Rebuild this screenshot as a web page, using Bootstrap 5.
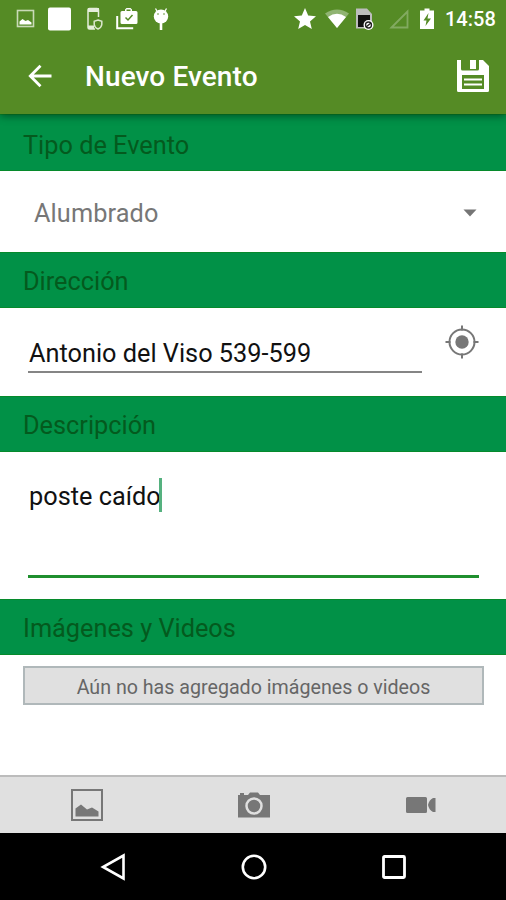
<!DOCTYPE html>
<html lang="es">
<head>
<meta charset="utf-8">
<meta name="viewport" content="width=device-width, initial-scale=1">
<title>Nuevo Evento</title>
<link href="https://cdn.jsdelivr.net/npm/bootstrap@5.3.0/dist/css/bootstrap.min.css" rel="stylesheet">
<style>
  body { font-family: Roboto, "Noto Sans", sans-serif; font-size: 25.3px; line-height: 30px; color: #111; background: #fff; }
  svg { display: block; flex: none; }
  .screen { height: 900px; max-width: 506px; }
  .top-area { background: #558b25; color: #fff; box-shadow: 0 2px 8px rgba(0,0,0,.45); z-index: 2; }
  .status-line { height: 38px; padding: 0 11px 0 16px; }
  .ic-square { margin-left: 13px; }
  .ic-phone { margin-left: 16px; }
  .ic-bag { margin-left: 13px; }
  .ic-droid { margin-left: 15px; }
  .ic-wifi { margin-left: 9px; }
  .ic-sim { margin-left: 6px; }
  .ic-signal { margin-left: 15px; }
  .ic-battery { margin: 0 11px; }
  .clock { font-size: 20px; font-weight: 500; line-height: 38px; width: 50px; white-space: nowrap; }
  .app-line { height: 76px; padding: 0 16px 0 27px; }
  .app-title { font-size: 28px; font-weight: 500; line-height: 30px; margin-left: 32px; padding-top: 2px; letter-spacing: .1px; }
  .section-title { background: #019147; color: #045a1e; height: 56px; padding: 3px 23px 0; font-size: 25.3px; font-weight: 400; line-height: 30px; border-top: 1px solid #068a2c; border-bottom: 1px solid #068a2c; }
  .section-first { height: 57px; padding-top: 6px; }
  .type-row { height: 81px; padding: 3px 29px 0 34px; color: #777; }
  .type-name { padding-top: 2px; letter-spacing: .1px; }
  .address-row { height: 88px; padding: 0 27px 0 28px; }
  .address-field { width: 394px; height: 65px; padding: 31px 0 0 1px; border-bottom: 2px solid #858585; }
  .locate { margin-top: 17px; }
  .description-row { height: 147px; padding: 0 27px 0 28px; }
  .description-field { height: 126px; padding: 26px 0 0 1px; border-bottom: 3px solid #1f8f2e; }
  .caret { width: 3px; height: 34px; background: #55b17f; margin-left: -2px; }
  .media-area { padding: 11px 22px 0 23px; }
  .media-empty { height: 39px; background: #e0e0e0; border: 2px solid #b0b8ba; color: #666; font-size: 19.65px; line-height: 24px; padding-top: 4px; }
  .media-tools { height: 58px; background: #e0e0e0; border-top: 2px solid #bcbcbc; color: #777; }
  .tool-image { padding-left: 4px; }
  .tool-video { padding-right: 2px; }
  .system-nav { height: 67px; background: #000; padding: 0 99px 0 100px; }
</style>
</head>
<body>
<main class="screen d-flex flex-column overflow-hidden">
  <header class="top-area position-relative flex-shrink-0">
    <div class="status-line d-flex align-items-center">
      <svg width="19" height="20" viewBox="0 0 19 20"><rect x="1.500" y="1.500" width="16" height="16" fill="none" stroke="#c9dab7" stroke-width="1.600"/><path d="M3.500 15.500v-3l3-2.500 3 2 2.500-1 3.500 2.500v2z" fill="#fff"/></svg>
      <svg class="ic-square" width="23" height="24" viewBox="0 0 23 24"><rect y=".5" width="23" height="23" rx="2" fill="#fff"/></svg>
      <svg class="ic-phone" width="16" height="24" viewBox="0 0 16 24"><path d="M11.500 10V2.800Q11.500 1.500 10 1.500H2.500Q1 1.500 1 2.800V20.500Q1 22 2.500 22H8" fill="none" stroke="#e5eedc" stroke-width="1.500"/><path d="M1 1h11v4H1zM1 18.500h6V22H1z" fill="#e5eedc"/><path d="M11 13l3.800 1.300v3.200Q14.500 20.500 11 22 7.500 20.500 7.200 17.500v-3.200z" fill="#558b25" stroke="#dce8cf" stroke-width="1.500"/></svg>
      <svg class="ic-bag" width="22" height="24" viewBox="0 0 22 24"><path d="M1.200 9v12.200h16" fill="none" stroke="#fff" stroke-width="2"/><path fill="#fff" fill-rule="evenodd" d="M6 4h3V2.500L10.500 1h4L16 2.500V4h4q1.500 0 1.500 1.500v10Q21.500 17 20 17H6q-1.500 0-1.500-1.500v-10Q4.500 4 6 4zM10.500 4h4V2.500h-4z"/><path d="M9.500 10.500l2.500 2.500 4.500-5" fill="none" stroke="#558b25" stroke-width="1.500"/></svg>
      <svg class="ic-droid" width="16" height="24" viewBox="0 0 16 24"><path d="M2.500 1.500l2 3.500M13.500 1.500l-2 3.500" stroke="#fff" stroke-width="1.300"/><ellipse cx="8" cy="9.500" rx="7.200" ry="7" fill="#fff"/><circle cx="5" cy="7" r=".8" fill="#558b25"/><circle cx="11" cy="7" r=".8" fill="#558b25"/><path d="M8 16v7" stroke="#fff" stroke-width="2.600"/></svg>
      <svg class="ms-auto" width="22" height="22" viewBox="0 0 22 22"><path fill="#fff" d="M11 0l3.200 7.500 7.800.7-6 5.200L17.800 21 11 17l-6.800 4L6 13.400 0 8.200l7.800-.7z"/></svg>
      <svg class="ic-wifi" width="24" height="20" viewBox="0 0 24 20"><path d="M0 4.500Q12-3.500 24 4.500L12 19z" fill="#90b472"/><path d="M3 8q9-6.500 18 0L12 19z" fill="#fff"/></svg>
      <svg class="ic-sim" width="19" height="24" viewBox="0 0 19 24"><path d="M1 1.500h11l5 5.500v14.500H1z" fill="#bdbdbd"/><path d="M3 8h12v12H3z" fill="#111"/><circle cx="13.500" cy="18" r="5" fill="#fff"/><circle cx="13.500" cy="18" r="3" fill="none" stroke="#222" stroke-width="1.300"/><path d="M11 20l5-4" stroke="#222" stroke-width="1.500"/></svg>
      <svg class="ic-signal" width="20" height="20" viewBox="0 0 20 20"><path d="M2.500 18.500L18.500 2.500v16z" fill="none" stroke="#82aa60" stroke-width="1.800"/></svg>
      <svg class="ic-battery" width="14" height="24" viewBox="0 0 14 24"><path d="M4.500 1.500h5v2H14V22H0V3.500h4.500z" fill="#fff"/><path d="M8.500 6L3.500 13.500H6.500L5.500 19l5.500-7.500H7.500z" fill="#558b25"/></svg>
      <span class="clock">14:58</span>
    </div>
    <div class="app-line d-flex align-items-center">
      <svg width="26" height="26" viewBox="0 0 26 26"><path d="M24.500 13H3.500M13.500 2.800L3.300 13l10.200 10.200" fill="none" stroke="#fff" stroke-width="2.800"/></svg>
      <h1 class="app-title mb-0">Nuevo Evento</h1>
      <svg class="ms-auto" width="33" height="33" viewBox="0 0 33 33"><path fill="#fff" fill-rule="evenodd" d="M0 0h4v9q0 1.500 1.500 1.500h15Q22 10.500 22 9V0h4l6 6v24.500q0 1.500-1.500 1.500h-29Q0 32 0 30.500zM5 15v14h22V15z"/><path d="M13 0h6v9h-6z" fill="#fff"/><path d="M7 19.500h18M7 24.500h18" stroke="#fff" stroke-width="2.200"/></svg>
    </div>
  </header>

  <h2 class="section-title section-first d-flex align-items-center flex-shrink-0 mb-0"><span>Tipo de Evento</span></h2>
  <div class="type-row d-flex align-items-center flex-shrink-0">
    <span class="type-name">Alumbrado</span>
    <svg class="ms-auto" width="14" height="8" viewBox="0 0 14 8"><path d="M.5.500h13L7 7.500z" fill="#757575"/></svg>
  </div>

  <h2 class="section-title d-flex align-items-center flex-shrink-0 mb-0"><span>Dirección</span></h2>
  <div class="address-row d-flex justify-content-between flex-shrink-0">
    <div class="address-field"><span>Antonio del Viso 539-599</span></div>
    <svg class="locate" width="34" height="34" viewBox="0 0 34 34"><g fill="none" stroke="#777" stroke-width="2"><circle cx="17" cy="17" r="12.500"/><path d="M17 .5v5M17 28.500v5M.5 17h5M28.500 17h5"/></g><circle cx="17" cy="17" r="6.700" fill="#777"/></svg>
  </div>

  <h2 class="section-title d-flex align-items-center flex-shrink-0 mb-0"><span>Descripción</span></h2>
  <div class="description-row flex-shrink-0">
    <div class="description-field d-flex align-items-start"><span class="pt-1">poste caído</span><span class="caret"></span></div>
  </div>

  <h2 class="section-title d-flex align-items-center flex-shrink-0 mb-0"><span>Imágenes y Videos</span></h2>
  <div class="media-area flex-grow-1">
    <div class="media-empty d-flex align-items-center justify-content-center"><span>Aún no has agregado imágenes o videos</span></div>
  </div>

  <div class="media-tools row g-0 align-items-center flex-shrink-0">
    <div class="col d-flex justify-content-center tool-image"><svg width="32" height="32" viewBox="0 0 32 32"><rect x="1" y="1" width="30" height="30" fill="none" stroke="#777" stroke-width="2"/><path d="M4.500 27.500v-8l5.500-4 6 5 5-2 6.500 4v5z" fill="#777"/></svg></div>
    <div class="col d-flex justify-content-center"><svg width="32" height="26" viewBox="0 0 32 26"><path fill="#777" d="M0 3h2V1h4v2h4l2-2.500h8L22 3h10v22.500H0z"/><circle cx="16" cy="14" r="7.500" fill="#777" stroke="#e0e0e0" stroke-width="2.500"/></svg></div>
    <div class="col d-flex justify-content-center tool-video"><svg width="30" height="18" viewBox="0 0 30 18"><path fill="#777" d="M1.500 1h18q1.500 0 1.500 1.500v13q0 1.500-1.500 1.500h-18Q0 17 0 15.500v-13Q0 1 1.500 1zM22 9q1-5 5-7h2.500v14H27q-4-2-5-7z"/></svg></div>
  </div>

  <nav class="system-nav d-flex align-items-center justify-content-between flex-shrink-0">
    <svg width="26" height="28" viewBox="0 0 26 28"><path d="M23.500 2.500v23L3 14z" fill="none" stroke="#fff" stroke-width="2.600"/></svg>
    <svg width="26" height="26" viewBox="0 0 26 26"><circle cx="13" cy="13" r="11.200" fill="none" stroke="#fff" stroke-width="2.600"/></svg>
    <svg width="26" height="26" viewBox="0 0 26 26"><rect x="2.500" y="2.500" width="21" height="21" rx="1" fill="none" stroke="#fff" stroke-width="2.800"/></svg>
  </nav>
</main>
<script src="https://cdn.jsdelivr.net/npm/bootstrap@5.3.0/dist/js/bootstrap.bundle.min.js"></script>
</body>
</html>
